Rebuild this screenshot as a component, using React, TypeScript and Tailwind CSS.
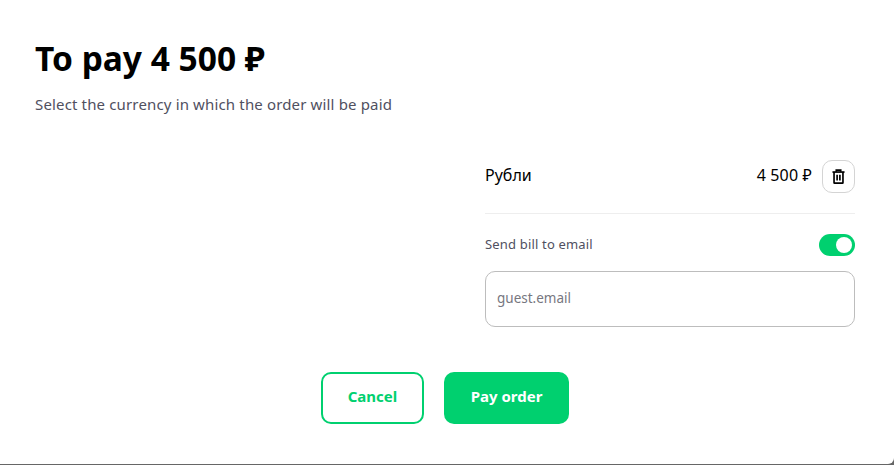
const GREEN = '#00d06f'

function TrashIcon() {
  return (
    <svg width="13" height="15" viewBox="0 0 14 16" fill="none" stroke="#000000" strokeWidth="1.8" className="-mt-[1px]">
      <path d="M0.5 3.2H13.5" />
      <path d="M4.6 3V1.2H9.4V3" />
      <path d="M2.2 3.2V14.6C2.2 14.9 2.4 15.1 2.7 15.1H11.3C11.6 15.1 11.8 14.9 11.8 14.6V3.2" />
      <path d="M5.5 6V12.3M8.5 6V12.3" />
    </svg>
  )
}

export default function App() {
  return (
    <div className="h-[465px] w-[894px] overflow-hidden bg-[#666666] font-['Noto_Sans','Liberation_Sans',sans-serif]">
      <div className="flex h-[464px] flex-col rounded-br-[6px] bg-white px-[35px] pt-[36px]">
        <h1 className="text-[33.5px] leading-[44px] font-bold text-black">To pay 4 500 ₽</h1>
        <p className="mt-[14px] text-[15px] leading-[20px] tracking-[0.15px] text-[#50505f]">Select the currency in which the order will be paid</p>

        <div className="mt-[46px] ml-[450px] w-[370px]">
          <div className="flex items-center justify-between border-b border-[#eeeeee] pb-[20px]">
            <span className="-mt-[3px] text-[16px] font-[450] text-black">Рубли</span>
            <div className="flex items-center gap-[10px]">
              <span className="-mt-[3px] text-[16px] font-[450] tracking-[0.15px] text-black">4 500 ₽</span>
              <button className="flex size-[33px] items-center justify-center rounded-[10px] border border-[#d4d4d4] bg-white">
                <TrashIcon />
              </button>
            </div>
          </div>

          <div className="mt-[20px] flex items-center justify-between">
            <span className="-mt-[2px] text-[13px] leading-[22px] tracking-[0.17px] text-[#50505f]">Send bill to email</span>
            <div className="flex h-[22px] w-[36px] items-center justify-end rounded-full bg-[#00d06f] pr-[3px]">
              <div className="size-[16px] rounded-full bg-white" />
            </div>
          </div>

          <input
            placeholder="guest.email"
            className="mt-[15px] h-[56px] w-full rounded-[10px] border border-[#bdbdbd] px-[11px] pb-[2px] text-[13.5px] outline-none placeholder:text-[#77777f]"
          />
        </div>

        <div className="mt-[45px] mr-[4px] flex justify-center gap-[20px]">
          <button
            className="h-[52px] w-[103px] rounded-[10px] border-2 bg-white pb-[4px] text-[15px] font-bold"
            style={{ borderColor: GREEN, color: GREEN }}
          >
            Cancel
          </button>
          <button className="h-[52px] w-[125px] rounded-[10px] bg-[#00d06f] pb-[4px] text-[15px] font-bold text-white">Pay order</button>
        </div>
      </div>
    </div>
  )
}
